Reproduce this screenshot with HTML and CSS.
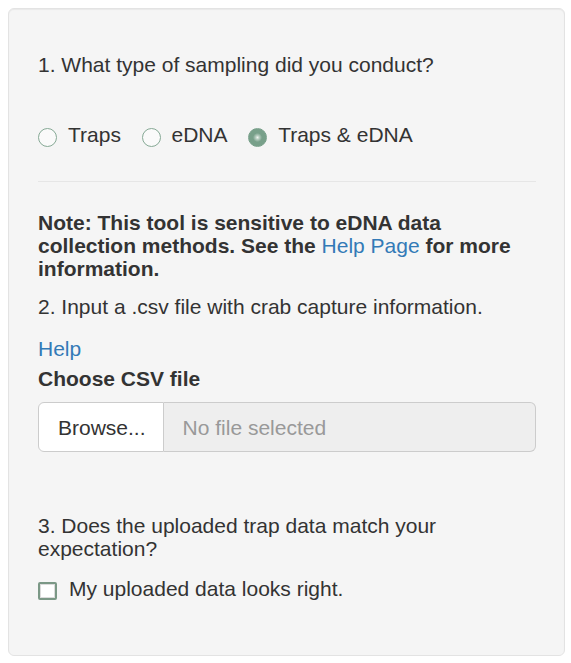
FILE: index.html
```html
<!DOCTYPE html>
<html>
<head>
<meta charset="utf-8">
<link rel="stylesheet" href="styles.css">
</head>
<body>
<div class="well">
  <div class="q q1">1. What type of sampling did you conduct?</div>
  <div class="radios">
    <label class="opt"><span class="radio"></span>Traps</label>
    <label class="opt"><span class="radio"></span>eDNA</label>
    <label class="opt"><span class="radio checked"></span>Traps &amp; eDNA</label>
  </div>
  <hr class="rule">
  <div class="note"><b>Note: This tool is sensitive to eDNA data collection methods. See the <a class="link" href="#">Help Page</a> for more information.</b></div>
  <div class="q q2">2. Input a .csv file with crab capture information.</div>
  <a class="link help" href="#">Help</a>
  <div class="label">Choose CSV file</div>
  <div class="file">
    <span class="browse">Browse...</span>
    <span class="filename">No file selected</span>
  </div>
  <div class="q q3">3. Does the uploaded trap data match your expectation?</div>
  <label class="check"><span class="box"></span>My uploaded data looks right.</label>
</div>
</body>
</html>
```
FILE: styles.css
```css
* { box-sizing: border-box; }
html, body { margin: 0; padding: 0; background: #fff; }
body {
  font-family: "Liberation Sans", Arial, sans-serif;
  font-size: 21px;
  line-height: 23px;
  color: #333;
}
.well {
  margin: 8px 0 0 8px;
  width: 557px;
  padding: 44px 28px 55px 29px;
  background: #f5f5f5;
  border: 1px solid #e3e3e3;
  border-radius: 6px;
  box-shadow: inset 0 1px 1px rgba(0,0,0,.05);
}
.q { display: block; }
.radios {
  display: flex;
  gap: 20.6px;
  margin-top: 47px;
}
.opt { display: block; }
.radio {
  display: inline-block;
  width: 19px;
  height: 19px;
  margin-right: 11px;
  vertical-align: -5px;
  border-radius: 50%;
  border: 1.3px solid #86a995;
  background: #fafafa;
}
.radio.checked {
  border-color: #78a08a;
  background: radial-gradient(circle, #eef3ef 0, #b3cabd 2px, #78a08a 4.5px);
}
.rule {
  margin: 34px 0 0 0;
  border: 0;
  border-top: 1px solid #e6e6e6;
  height: 0;
}
.note {
  margin-top: 29px;
}
.note b { font-weight: bold; }
.note .link { font-weight: normal; }
.link { color: #337ab7; text-decoration: none; }
.q2 { margin-top: 15px; }
.help { display: block; margin-top: 19px; }
.label { font-weight: bold; margin-top: 7px; }
.file {
  display: flex;
  margin-top: 12px;
  height: 50px;
}
.browse {
  display: flex;
  align-items: center;
  padding: 0 17px 0 19px;
  background: #fff;
  border: 1px solid #ccc;
  border-radius: 6px 0 0 6px;
}
.filename {
  flex: 1;
  display: flex;
  align-items: center;
  padding-left: 19px;
  color: #999;
  background: #eee;
  border: 1px solid #ccc;
  border-left: 0;
  border-radius: 0 6px 6px 0;
}
.q3 { margin-top: 62px; }
.check { display: block; margin-top: 17px; }
.box {
  display: inline-block;
  width: 19px;
  height: 18px;
  margin-right: 12px;
  vertical-align: -4px;
  background: #fff;
  border: 2px solid #7b9886;
  border-radius: 2px;
  box-shadow: inset 0 0 0 1px #dcdcdc;
}
```
